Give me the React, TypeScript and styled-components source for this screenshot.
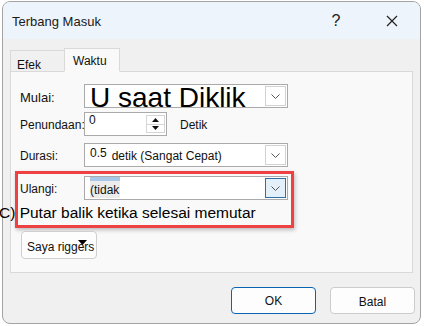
import React from "react";
import styled, { createGlobalStyle } from "styled-components";

const Global = createGlobalStyle`
  html, body { margin: 0; padding: 0; background: #ffffff; }
  body { width: 424px; height: 326px; overflow: hidden; font-family: "Liberation Sans", Arial, sans-serif; }
`;

const Window = styled.div`
  margin: 1px 0 0 2px;
  width: 419px;
  height: 323px;
  box-sizing: border-box;
  border: 1px solid #a3a3a3;
  border-radius: 8px;
  background: #f0f0f0;
  display: flex;
  flex-direction: column;
`;

const TitleBar = styled.div`
  height: 37px;
  flex: none;
  background: #eef4fb;
  border-radius: 7px 7px 0 0;
  display: flex;
  align-items: center;
  padding: 0 5px 0 9px;
  color: #1a1a1a;
  font-size: 13px;
`;

const Title = styled.div`
  flex: 1;
  padding-top: 2px;
`;

const TitleButton = styled.div<{ $w: number }>`
  width: ${(p) => p.$w}px;
  height: 30px;
  display: flex;
  align-items: center;
  justify-content: center;
  font-size: 16px;
  color: #222;
`;

const Content = styled.div`
  padding: 9px 7px 0 7px;
  display: flex;
  flex-direction: column;
`;

const TabRow = styled.div`
  display: flex;
  align-items: flex-end;
  height: 24px;
  margin-bottom: -1px;
  position: relative;
  z-index: 1;
`;

const Tab = styled.div<{ $active?: boolean }>`
  box-sizing: border-box;
  height: ${(p) => (p.$active ? 24 : 22)}px;
  padding: ${(p) => (p.$active ? "5px 0 0 8px" : "7px 0 0 6px")};
  width: ${(p) => (p.$active ? 56 : 54)}px;
  font-size: 12px;
  color: #111;
  background: ${(p) => (p.$active ? "#f9f9f9" : "#f0f0f0")};
  border: 1px solid #d9d9d9;
  border-bottom: ${(p) => (p.$active ? "1px solid #f9f9f9" : "1px solid #d9d9d9")};
  ${(p) => (p.$active ? "" : "border-right: none;")}
`;

const Panel = styled.div`
  box-sizing: border-box;
  height: 202px;
  background: #f9f9f9;
  border: 1px solid #d9d9d9;
  padding: 12px 0 0 9px;
  display: flex;
  flex-direction: column;
`;

const Row = styled.div<{ $mt?: number }>`
  display: flex;
  align-items: center;
  height: 24px;
  margin-top: ${(p) => p.$mt ?? 0}px;
`;

const Label = styled.div<{ $size?: number }>`
  width: 64px;
  flex: none;
  font-size: ${(p) => p.$size ?? 12}px;
  color: #111;
  white-space: nowrap;
  padding-top: 2px;
`;

const Combo = styled.div`
  box-sizing: border-box;
  width: 204px;
  height: 24px;
  background: #ffffff;
  border: 1px solid #aaaaaa;
  display: flex;
  align-items: center;
  padding-left: 5px;
`;

const ComboText = styled.div`
  flex: 1;
  display: flex;
  align-items: center;
  font-size: 12px;
  color: #111;
  white-space: nowrap;
`;

const BigText = styled.span`
  font-size: 28px;
  line-height: 22px;
  margin-top: 3px;
  color: #000;
`;

const DropButton = styled.div<{ $hot?: boolean }>`
  box-sizing: border-box;
  width: 21px;
  height: 20px;
  margin-right: 1px;
  flex: none;
  display: flex;
  align-items: center;
  justify-content: center;
  border: 1px solid ${(p) => (p.$hot ? "#2f6fa8" : "#d2d2d2")};
  background: ${(p) => (p.$hot ? "#e3eff9" : "#ffffff")};
`;

const Chevron = () => (
  <svg width="9" height="5" viewBox="0 0 9 5">
    <path d="M0.5 0.5 L4.5 4.5 L8.5 0.5" fill="none" stroke="#555" strokeWidth="1" />
  </svg>
);

const Spinner = styled.div`
  box-sizing: border-box;
  width: 83px;
  height: 24px;
  background: #fff;
  border: 1px solid #aaaaaa;
  display: flex;
  align-items: stretch;
  padding-left: 4px;
`;

const SpinValue = styled.div`
  flex: 1;
  font-size: 12px;
  line-height: 14px;
  color: #111;
`;

const SpinButtons = styled.div`
  width: 19px;
  margin: 2px 1px 2px 0;
  display: flex;
  flex-direction: column;
  border: 1px solid #d6d6d6;
  box-sizing: border-box;
`;

const SpinHalf = styled.div<{ $top?: boolean }>`
  flex: 1;
  display: flex;
  align-items: center;
  justify-content: center;
  ${(p) => (p.$top ? "border-bottom: 1px solid #d6d6d6;" : "")}
`;

const Tri = ({ up }: { up?: boolean }) => (
  <svg width="7" height="4" viewBox="0 0 7 4">
    <path d={up ? "M0 4 L3.5 0 L7 4 Z" : "M0 0 L3.5 4 L7 0 Z"} fill="#111" />
  </svg>
);

const Unit = styled.div`
  font-size: 12px;
  color: #111;
  margin-left: 13px;
  padding-top: 2px;
`;

const Small = styled.span<{ $mr?: number; $mt?: number }>`
  font-size: 12px;
  margin-right: ${(p) => p.$mr ?? 0}px;
  margin-top: ${(p) => p.$mt ?? 0}px;
`;

const Highlight = styled.div`
  margin: 4px 0 0 -5px;
  width: 279px;
  box-sizing: border-box;
  border: 3px solid #ee4242;
  box-shadow: 1px 2px 4px rgba(0, 0, 0, 0.25);
  padding: 0 0 0 2px;
  display: flex;
  flex-direction: column;
`;

const Selected = styled.span`
  position: relative;
  font-size: 12px;
  background: #ececec;
  padding: 2px 1px 1px 0;
  margin-top: 3px;
  &::before {
    content: "";
    position: absolute;
    left: 0;
    right: 0;
    top: -4px;
    height: 4px;
    background: #a9c8e8;
  }
`;

const BigLine = styled.div`
  height: 25px;
  display: flex;
  align-items: center;
  margin-left: -21px;
  font-size: 15.5px;
  color: #000;
  white-space: nowrap;
`;

const TriggerButton = styled.div`
  margin: 3px 0 0 1px;
  position: relative;
  align-self: flex-start;
  box-sizing: border-box;
  width: 76px;
  height: 28px;
  border: 1px solid #cfcfcf;
  border-radius: 4px;
  background: #fdfdfd;
  font-size: 12px;
  color: #111;
  display: flex;
  align-items: center;
  padding: 3px 0 0 5px;
`;

const TriggerArrow = styled.span`
  position: absolute;
  left: 56px;
  top: 8px;
  width: 9px;
  height: 5px;
  display: block;
  line-height: 0;
`;

const Footer = styled.div`
  display: flex;
  justify-content: flex-end;
  gap: 14px;
  margin: 14px -2px 0 0;
`;

const Button = styled.div<{ $primary?: boolean }>`
  box-sizing: border-box;
  width: 85px;
  height: 27px;
  border-radius: 4px;
  border: 1px solid ${(p) => (p.$primary ? "#0a64b4" : "#cccccc")};
  background: #fdfdfd;
  display: flex;
  align-items: center;
  justify-content: center;
  font-size: 12px;
  color: #111;
  padding-top: ${(p) => (p.$primary ? 0 : 2)}px;
`;

export default function App() {
  return (
    <>
      <Global />
      <Window>
        <TitleBar>
          <Title>Terbang Masuk</Title>
          <TitleButton $w={66}>?</TitleButton>
          <TitleButton $w={46}>
            <svg width="12" height="12" viewBox="0 0 12 12">
              <path d="M1 1 L11 11 M11 1 L1 11" stroke="#222" strokeWidth="1.2" />
            </svg>
          </TitleButton>
        </TitleBar>
        <Content>
          <TabRow>
            <Tab>Efek</Tab>
            <Tab $active>Waktu</Tab>
          </TabRow>
          <Panel>
            <Row>
              <Label $size={13}>Mulai:</Label>
              <Combo>
                <ComboText>
                  <BigText>U saat Diklik</BigText>
                </ComboText>
                <DropButton>
                  <Chevron />
                </DropButton>
              </Combo>
            </Row>
            <Row $mt={4}>
              <Label>Penundaan:</Label>
              <Spinner>
                <SpinValue>0</SpinValue>
                <SpinButtons>
                  <SpinHalf $top>
                    <Tri up />
                  </SpinHalf>
                  <SpinHalf>
                    <Tri />
                  </SpinHalf>
                </SpinButtons>
              </Spinner>
              <Unit>Detik</Unit>
            </Row>
            <Row $mt={7}>
              <Label>Durasi:</Label>
              <Combo>
                <ComboText>
                  <Small $mr={5} $mt={-4}>0.5</Small>
                  <Small $mt={2}>detik (Sangat Cepat)</Small>
                </ComboText>
                <DropButton>
                  <Chevron />
                </DropButton>
              </Combo>
            </Row>
            <Highlight>
              <Row $mt={2}>
                <Label>Ulangi:</Label>
                <Combo>
                  <ComboText>
                    <Selected>(tidak</Selected>
                  </ComboText>
                  <DropButton $hot>
                    <Chevron />
                  </DropButton>
                </Combo>
              </Row>
              <BigLine>C) Putar balik ketika selesai memutar</BigLine>
            </Highlight>
            <TriggerButton>
              Saya riggers
              <TriggerArrow>
                <svg width="9" height="5" viewBox="0 0 9 5">
                  <path d="M0 0 H9 L4.5 5 Z" fill="#000" />
                </svg>
              </TriggerArrow>
            </TriggerButton>
          </Panel>
          <Footer>
            <Button $primary>OK</Button>
            <Button>Batal</Button>
          </Footer>
        </Content>
      </Window>
    </>
  );
}
